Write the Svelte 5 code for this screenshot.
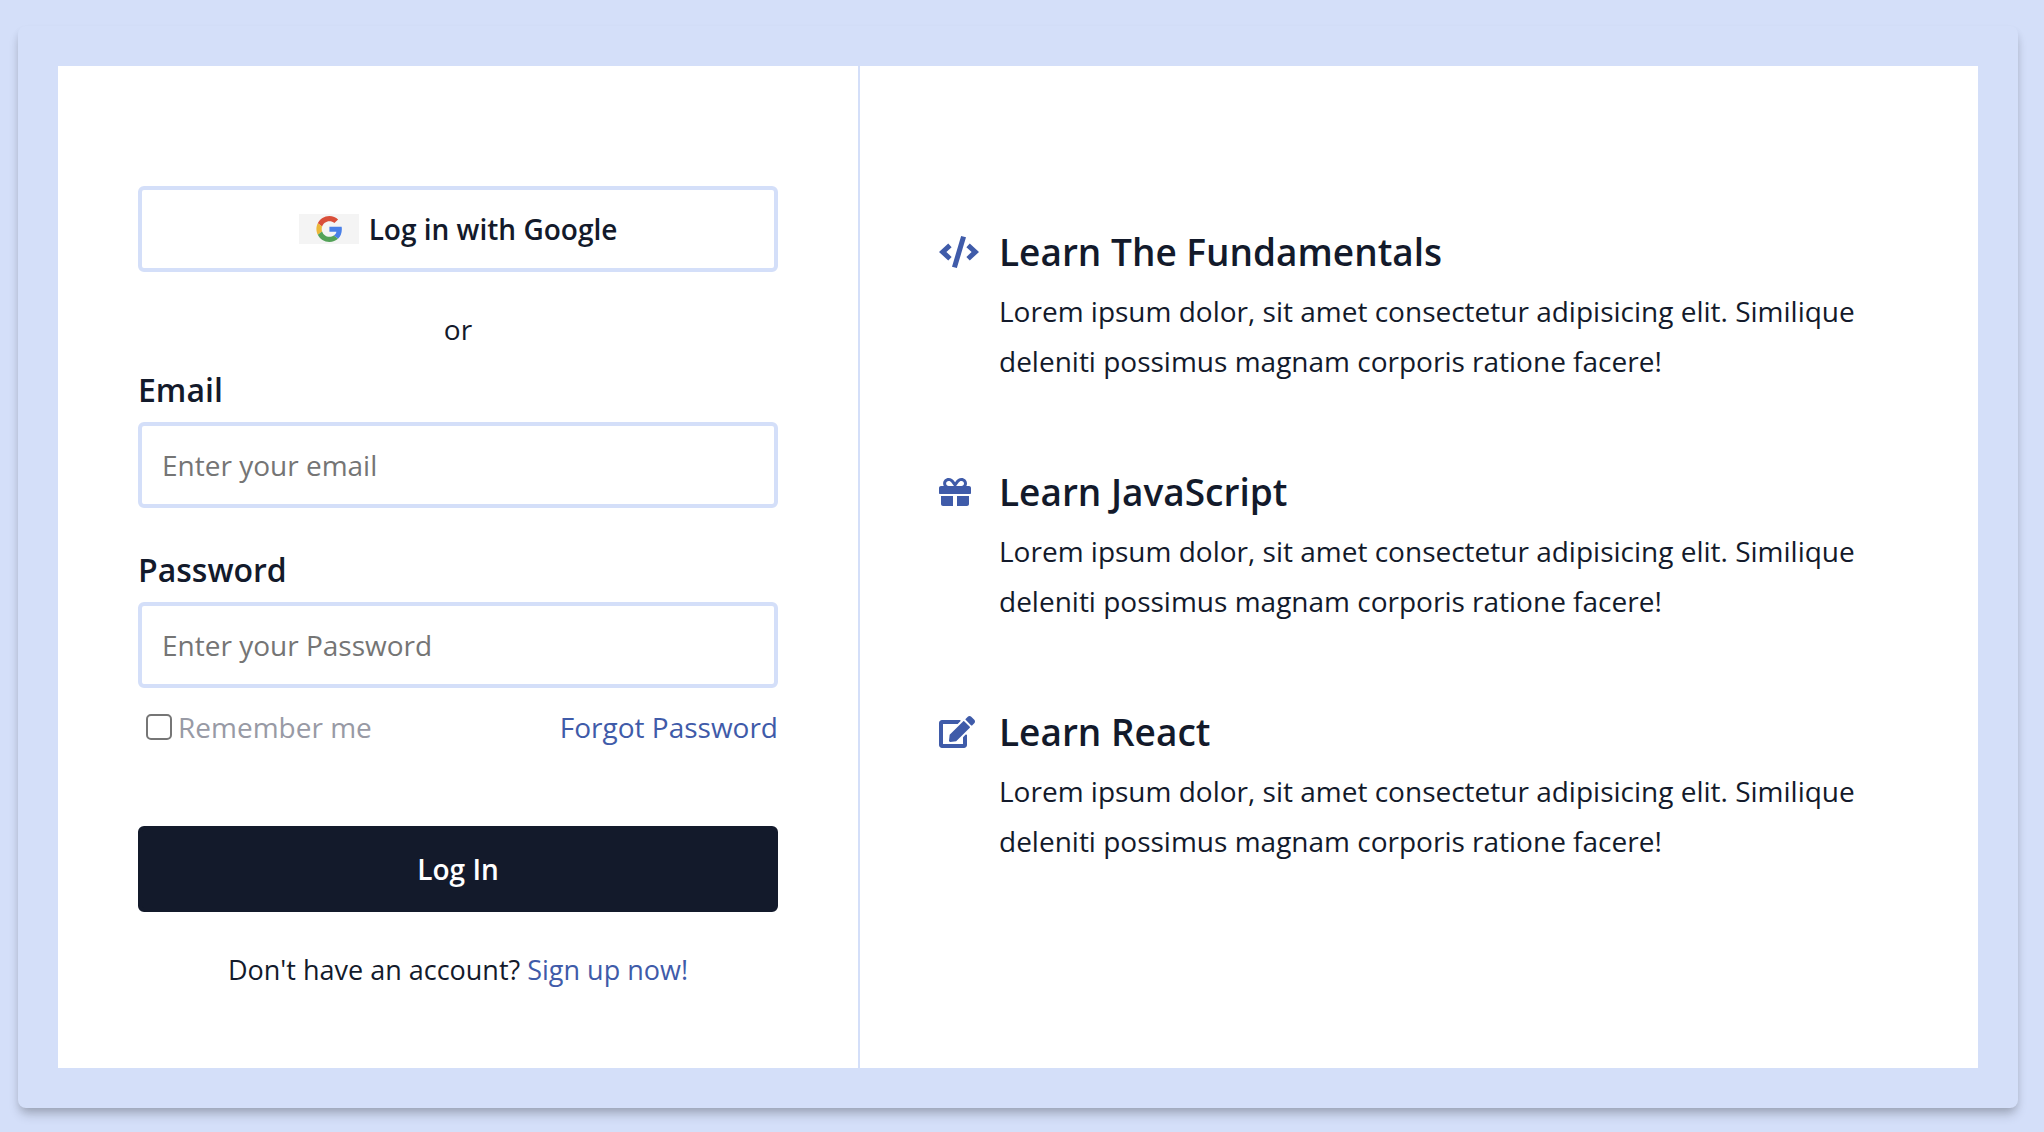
<script>
  let email = $state('');
  let password = $state('');
  let remember = $state(false);

  const blurb =
    'Lorem ipsum dolor, sit amet consectetur adipisicing elit. Similique deleniti possimus magnam corporis ratione facere!';

  const features = [
    {
      title: 'Learn The Fundamentals',
      width: 640,
      path: 'M0 256L148 120L202 178L118 256L202 334L148 392zM640 256L492 120L438 178L522 256L438 334L492 392zM354 0L432 20L286 512L208 492z'
    },
    {
      title: 'Learn JavaScript',
      width: 512,
      path: 'M32 448c0 17.7 14.3 32 32 32h160V320H32v128zm256 32h160c17.7 0 32-14.3 32-32V320H288v160zm192-320h-42.1c6.2-12.1 10.1-25.5 10.1-40 0-48.5-39.5-88-88-88-41.6 0-68.5 21.3-103 68.3-34.5-47-61.4-68.3-103-68.3-48.5 0-88 39.5-88 88 0 14.5 3.8 27.9 10.1 40H32c-17.7 0-32 14.3-32 32v80c0 8.8 7.2 16 16 16h480c8.8 0 16-7.2 16-16v-80c0-17.7-14.3-32-32-32zm-326.1 0c-22.1 0-40-17.9-40-40s17.9-40 40-40c19.9 0 34.6 3.3 86.1 80h-86.1zm206.1 0h-86.1c51.4-76.5 65.7-80 86.1-80 22.1 0 40 17.9 40 40s-17.9 40-40 40z'
    },
    {
      title: 'Learn React',
      width: 576,
      path: 'M402.6 83.2l90.2 90.2c3.8 3.8 3.8 10 0 13.8L274.4 405.6l-92.8 10.3c-12.4 1.4-22.9-9.1-21.5-21.5l10.3-92.8L388.8 83.2c3.8-3.8 10-3.8 13.8 0zm162-22.9l-48.8-48.8c-15.2-15.2-39.9-15.2-55.2 0l-35.4 35.4c-3.8 3.8-3.8 10 0 13.8l90.2 90.2c3.8 3.8 10 3.8 13.8 0l35.4-35.4c15.2-15.3 15.2-40 0-55.2zM384 346.2V448H64V128h229.8c3.2 0 6.2-1.3 8.5-3.5l40-40c7.6-7.6 2.2-20.5-8.5-20.5H48C21.5 64 0 85.5 0 112v352c0 26.5 21.5 48 48 48h352c26.5 0 48-21.5 48-48V306.2c0-10.7-12.9-16-20.5-8.5l-40 40c-2.2 2.3-3.5 5.3-3.5 8.5z'
    }
  ];
</script>

<main class="card">
  <div class="panel">
    <form class="login" onsubmit={(e) => e.preventDefault()}>
      <button class="btn google" type="button">
        <svg class="badge" viewBox="0 0 60 30" aria-hidden="true">
          <rect width="60" height="30" fill="#f4f4f4" />
          <g transform="translate(17.4 2) scale(.5417)">
            <path fill="#d94f3a" d="M24 9.5c3.54 0 6.71 1.22 9.21 3.6l6.85-6.85C35.9 2.38 30.47 0 24 0 14.62 0 6.51 5.38 2.56 13.22l7.98 6.19C12.43 13.72 17.74 9.5 24 9.5z" />
            <path fill="#4a80e8" d="M46.98 24.55c0-1.57-.15-3.09-.38-4.55H24v9.02h12.94c-.58 2.96-2.26 5.48-4.78 7.18l7.73 6c4.51-4.18 7.09-10.36 7.09-17.65z" />
            <path fill="#ecb83a" d="M10.53 28.59c-.48-1.45-.76-2.99-.76-4.59s.27-3.14.76-4.59l-7.98-6.19C.92 16.46 0 20.12 0 24c0 3.88.92 7.54 2.56 10.78l7.97-6.19z" />
            <path fill="#53a258" d="M24 48c6.48 0 11.93-2.13 15.89-5.81l-7.73-6c-2.15 1.45-4.92 2.3-8.16 2.3-6.26 0-11.57-4.22-13.47-9.91l-7.98 6.19C6.51 42.62 14.62 48 24 48z" />
          </g>
        </svg>
        Log in with Google
      </button>

      <p class="or">or</p>

      <div class="field">
        <label for="email">Email</label>
        <input id="email" type="email" placeholder="Enter your email" bind:value={email} />
      </div>

      <div class="field">
        <label for="password">Password</label>
        <input id="password" type="password" placeholder="Enter your Password" bind:value={password} />
      </div>

      <div class="options">
        <label class="remember">
          <input type="checkbox" bind:checked={remember} />
          Remember me
        </label>
        <a href="#forgot">Forgot Password</a>
      </div>

      <button class="btn submit" type="submit">Log In</button>

      <p class="signup">Don't have an account? <a href="#signup">Sign up now!</a></p>
    </form>

    <section class="features">
      {#each features as f}
        <article>
          <div class="icon">
            <svg viewBox="0 0 {f.width} 512" aria-hidden="true"><path d={f.path} /></svg>
          </div>
          <div>
            <h2>{f.title}</h2>
            <p>{blurb}</p>
          </div>
        </article>
      {/each}
    </section>
  </div>
</main>

<style>
  :global(body) {
    margin: 0;
    background: #d4dff9;
    color: #131a2b;
    font: 28px/50px 'Open Sans', 'Noto Sans', sans-serif;
  }
  :global(*) {
    box-sizing: border-box;
  }
  .card {
    margin: 26px 26px 24px 18px;
    padding: 40px;
    border-radius: 8px;
    background: #d4dff9;
    box-shadow: 0 8px 12px -2px rgba(0, 0, 0, 0.2), 0 4px 8px -2px rgba(0, 0, 0, 0.12);
  }
  .panel {
    display: grid;
    grid-template-columns: 5fr 7fr;
    background: #fff;
  }
  p,
  h2 {
    margin: 0;
  }
  a {
    color: #3f5ba9;
    text-decoration: none;
  }
  .login {
    display: flex;
    flex-direction: column;
    padding: 120px 80px 73px;
  }
  .btn {
    display: flex;
    align-items: center;
    justify-content: center;
    height: 86px;
    border: 4px solid #d4dff9;
    border-radius: 6px;
    background: #fff;
    color: inherit;
    font: inherit;
    font-weight: 600;
    cursor: pointer;
  }
  .google {
    gap: 10px;
  }
  .badge {
    width: 60px;
    height: 30px;
  }
  .submit {
    margin-top: 74px;
    border-color: #131a2b;
    background: #131a2b;
    color: #fff;
  }
  .or {
    margin: 32px 0 11px;
    text-align: center;
  }
  .field {
    display: flex;
    flex-direction: column;
    gap: 7px;
  }
  .field + .field {
    margin-top: 37px;
  }
  .field label {
    font-size: 32px;
    font-weight: 600;
  }
  .field input {
    width: 100%;
    height: 86px;
    padding: 0 20px;
    border: 4px solid #d4dff9;
    border-radius: 6px;
    color: inherit;
    font: inherit;
  }
  .field input::placeholder {
    color: #757575;
  }
  .options {
    display: flex;
    justify-content: space-between;
    margin-top: 14px;
  }
  .remember {
    display: flex;
    align-items: center;
    gap: 6px;
    color: #989aa5;
  }
  .remember input {
    appearance: none;
    width: 26px;
    height: 26px;
    margin: 0 0 0 8px;
    border: 2px solid #767676;
    border-radius: 5px;
    background: #fff;
  }
  .remember input:checked {
    background: #3f5ba9;
  }
  .signup {
    margin-top: 33px;
    font-size: 27px;
    text-align: center;
  }
  .features {
    display: flex;
    flex-direction: column;
    gap: 81px;
    padding: 161px 79px 80px;
    border-left: 2px solid #d4dff9;
  }
  article {
    display: grid;
    grid-template-columns: 60px 1fr;
  }
  .icon {
    display: flex;
    align-items: center;
    height: 50px;
  }
  .icon svg {
    height: 32px;
    fill: #3f5ba9;
  }
  h2 {
    margin-bottom: 9px;
    font-size: 37px;
    font-weight: 600;
    line-height: 50px;
  }
</style>
